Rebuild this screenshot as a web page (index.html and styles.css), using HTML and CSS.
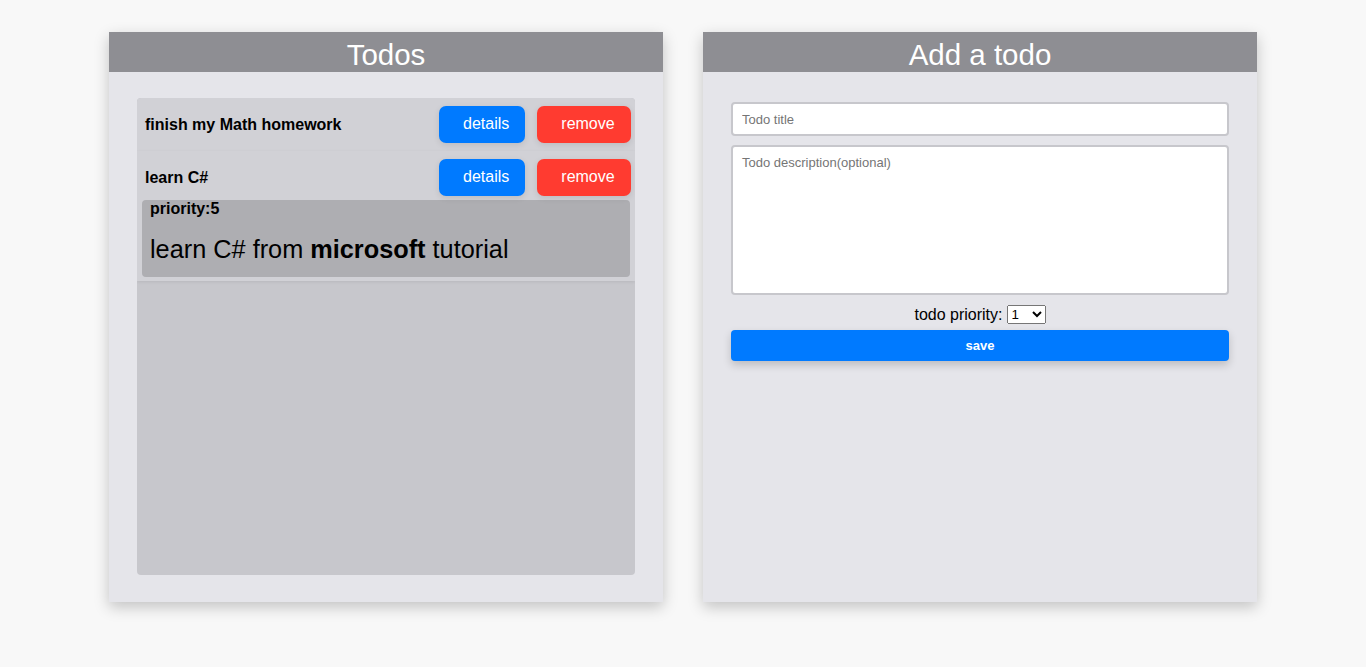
FILE: index.html
```html
<!DOCTYPE html>
<html>
<head>
<meta charset="utf-8">
<link rel="stylesheet" href="styles.css">
</head>
<body>
<div class="page">
  <section class="card">
    <header class="card-head"><h1>Todos</h1></header>
    <div class="card-body">
      <div class="list">
        <div class="item">
          <div class="row">
            <span class="title">finish my Math homework</span>
            <button class="btn btn-blue">details</button>
            <button class="btn btn-red">remove</button>
          </div>
        </div>
        <div class="item">
          <div class="row">
            <span class="title">learn C#</span>
            <button class="btn btn-blue">details</button>
            <button class="btn btn-red">remove</button>
          </div>
          <div class="details">
            <div class="prio">priority:5</div>
            <p class="desc">learn C# from <b>microsoft</b> tutorial</p>
          </div>
        </div>
      </div>
    </div>
  </section>
  <section class="card">
    <header class="card-head"><h1>Add a todo</h1></header>
    <div class="card-body form">
      <input class="field" type="text" placeholder="Todo title">
      <textarea class="field area" placeholder="Todo description(optional)"></textarea>
      <div class="prio-row">
        <label>todo priority:</label>
        <select class="sel">
          <option>1</option><option>2</option><option>3</option><option>4</option><option>5</option>
        </select>
      </div>
      <button class="save">save</button>
    </div>
  </section>
</div>
</body>
</html>
```

FILE: styles.css
```css
html, body {
  margin: 0;
  padding: 0;
  background: #f8f8f8;
  font-family: "Liberation Sans", Arial, sans-serif;
}
.page {
  display: flex;
  justify-content: center;
  gap: 40px;
  padding: 32px 0 40px;
}
.card {
  width: 554px;
  height: 570px;
  background: #e5e5ea;
  box-shadow: 0 5px 14px rgba(0, 0, 0, 0.22);
  display: flex;
  flex-direction: column;
}
.card-head {
  height: 40px;
  background: #8e8e93;
  flex: none;
}
.card-head h1 {
  margin: 0;
  font-size: 29.5px;
  font-weight: normal;
  color: #fff;
  text-align: center;
  line-height: 46px;
  height: 40px;
}
.card-body {
  padding: 26px 28px 27px;
  flex: 1;
}
.list {
  height: 477px;
  background: #c7c7cc;
  border-radius: 4px;
  overflow: hidden;
}
.item {
  background: #d1d1d6;
  padding: 4px;
  box-shadow: 0 1px 3px rgba(0, 0, 0, 0.08);
}
.row {
  display: flex;
  align-items: center;
  margin: 4px 0;
}
.title {
  flex: 1;
  margin-left: 4px;
  font-weight: bold;
  font-size: 16px;
  color: #000;
}
.btn {
  height: 37px;
  border: none;
  border-radius: 7px;
  color: #fff;
  font-family: "Liberation Sans", Arial, sans-serif;
  font-size: 16px;
  padding: 0 16px 2px 24px;
  box-shadow: 0 2px 6px rgba(0, 0, 0, 0.1);
}
.btn-blue {
  background: #007aff;
  width: 86px;
}
.btn-red {
  background: #ff3b30;
  width: 94px;
  margin-left: 12px;
}
.details {
  margin: 0 1px;
  background: #aeaeb2;
  border-radius: 4px;
  padding: 0 8px 13px;
}
.prio {
  font-weight: bold;
  font-size: 16px;
  color: #000;
}
.desc {
  margin: 17px 0 0;
  font-size: 25.3px;
  color: #000;
}
.form {
  padding-top: 30px;
  display: flex;
  flex-direction: column;
}
.field {
  box-sizing: border-box;
  width: 100%;
  height: 34px;
  border: 2px solid #c7c7cc;
  border-radius: 4px;
  background: #fff;
  font-family: "Liberation Sans", Arial, sans-serif;
  font-size: 13px;
  padding: 0 9px;
  margin: 0;
  outline: none;
}
.field::placeholder {
  color: #757575;
}
.area {
  height: 150px;
  margin-top: 9px;
  padding-top: 8px;
  resize: none;
  display: block;
}
.prio-row {
  display: flex;
  justify-content: center;
  align-items: center;
  gap: 4px;
  margin-top: 10px;
  font-size: 16px;
  color: #000;
}
.sel {
  font-family: "Liberation Sans", Arial, sans-serif;
  font-size: 13.33px;
  height: 19px;
  width: 39px;
}
.save {
  margin-top: 6px;
  height: 31px;
  border: none;
  border-radius: 4px;
  background: #007aff;
  color: #fff;
  font-family: "Liberation Sans", Arial, sans-serif;
  font-weight: bold;
  font-size: 13px;
  box-shadow: 0 4px 8px rgba(0, 0, 0, 0.18);
}
```
